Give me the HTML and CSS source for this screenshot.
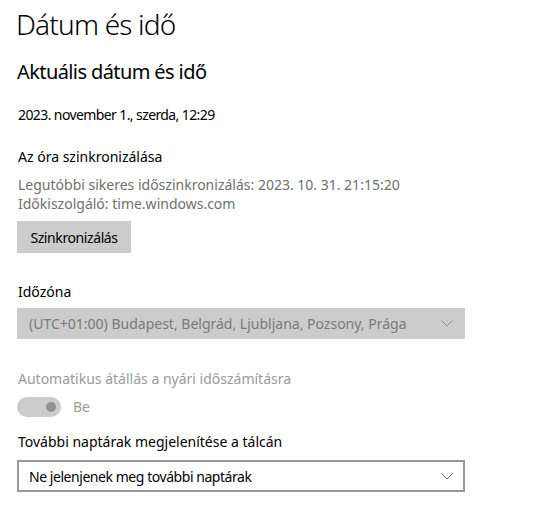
FILE: index.html
```html
<!DOCTYPE html>
<html lang="hu">
<head>
    <meta charset="UTF-8">
    <meta name="viewport" content="width=device-width, initial-scale=1.0">
    <title>Dátum és idő</title>
    <link rel="stylesheet" href="styles.css">
</head>
<body>
    <div class="page">
        <h1>Dátum és idő</h1>
        <h2>Aktuális dátum és idő</h2>
        <p class="now">2023. november 1., szerda, 12:29</p>

        <div class="sync">
            <p class="label">Az óra szinkronizálása</p>
            <p class="info">Legutóbbi sikeres időszinkronizálás: 2023. 10. 31. 21:15:20</p>
            <p class="info">Időkiszolgáló: time.windows.com</p>
            <button class="btn">Szinkronizálás</button>
        </div>

        <div class="field">
            <p class="label">Időzóna</p>
            <div class="select disabled">
                <span>(UTC+01:00) Budapest, Belgrád, Ljubljana, Pozsony, Prága</span>
                <svg class="chev" width="12" height="7" viewBox="0 0 12 7"><path d="M0.5 0.5 L6 6 L11.5 0.5" fill="none" stroke="#8a8a8a" stroke-width="1"/></svg>
            </div>
        </div>

        <div class="field dst">
            <p class="label muted">Automatikus átállás a nyári időszámításra</p>
            <div class="toggle-row">
                <span class="toggle"><span class="knob"></span></span>
                <span class="toggle-text">Be</span>
            </div>
        </div>

        <div class="field cal">
            <p class="label">További naptárak megjelenítése a tálcán</p>
            <div class="select">
                <span class="tight">Ne jelenjenek meg további naptárak</span>
                <svg class="chev" width="12" height="7" viewBox="0 0 12 7"><path d="M0.5 0.5 L6 6 L11.5 0.5" fill="none" stroke="#666" stroke-width="1"/></svg>
            </div>
        </div>
    </div>
</body>
</html>
```

FILE: styles.css
```css
body {
    margin: 0;
    background: #fff;
    color: #000;
    font-family: 'Segoe UI', 'Noto Sans', 'Open Sans', sans-serif;
    font-size: 14px;
}
.page {
    padding: 0 17px;
    width: 448px;
}
p {
    margin: 0;
}
h1 {
    font-weight: 300;
    font-size: 28px;
    line-height: 40px;
    letter-spacing: -0.8px;
    margin: 4px 0 0 -1px;
}
h2 {
    font-weight: 400;
    font-size: 20px;
    line-height: 28px;
    letter-spacing: -0.6px;
    margin: 14px 0 0;
}
.now {
    line-height: 20px;
    margin-top: 19px;
    padding-left: 1px;
    letter-spacing: -0.6px;
}
.sync {
    margin-top: 22px;
}
.label {
    line-height: 20px;
    padding-left: 1px;
}
.info {
    color: #6f6f6f;
    line-height: 19px;
    padding-left: 1px;
}
.sync .label {
    margin-bottom: 8px;
}
.btn {
    display: block;
    margin-top: 8px;
    width: 114px;
    height: 32px;
    border: none;
    background: #cccccc;
    font: inherit;
    letter-spacing: -0.4px;
    color: #000;
    padding: 0;
}
.field {
    margin-top: 29px;
}
.field .label {
    margin-bottom: 6px;
}
.select {
    height: 31px;
    box-sizing: border-box;
    border: 2px solid #999;
    display: flex;
    align-items: center;
    justify-content: space-between;
    padding: 0 10px 0 10px;
}
.select.disabled {
    background: #cccccc;
    border-color: #cccccc;
    color: #7a7a7a;
}
.tight {
    letter-spacing: -0.45px;
}
.chev {
    display: block;
}
.dst {
    margin-top: 30px;
}
.muted {
    color: #9a9a9a;
}
.dst .label {
    margin-bottom: 8px;
}
.toggle-row {
    display: flex;
    align-items: center;
    gap: 12px;
}
.toggle {
    width: 44px;
    height: 20px;
    border-radius: 10px;
    background: #cccccc;
    position: relative;
}
.knob {
    position: absolute;
    right: 5px;
    top: 5px;
    width: 10px;
    height: 10px;
    border-radius: 50%;
    background: #929292;
}
.toggle-text {
    color: #9a9a9a;
    line-height: 20px;
}
.cal {
    margin-top: 15px;
}
.cal .label {
    margin-bottom: 8px;
}
.cal .select {
    height: 32px;
}
```
